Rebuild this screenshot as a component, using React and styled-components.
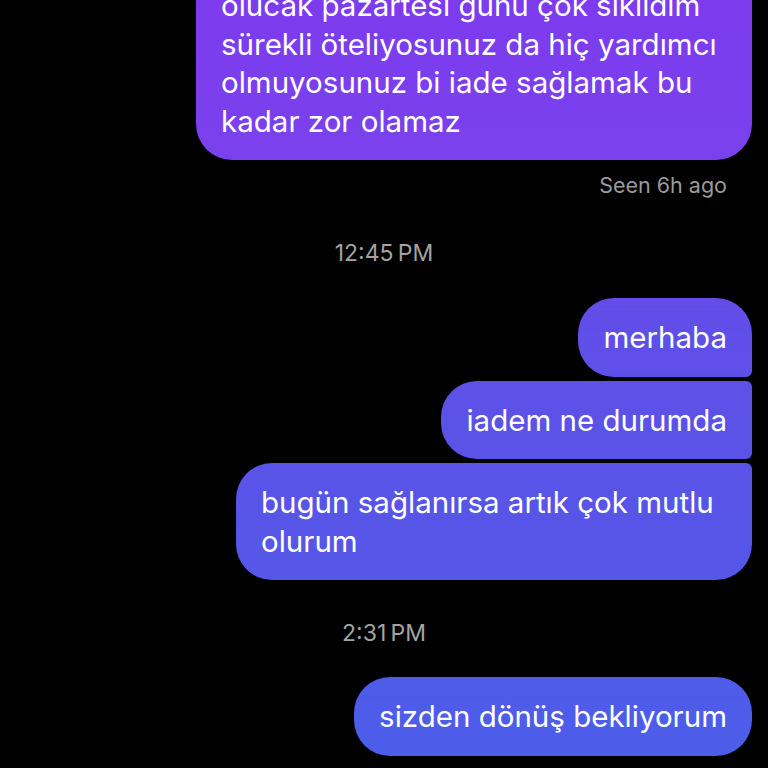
import React from "react";
import styled, { createGlobalStyle } from "styled-components";

const GlobalStyle = createGlobalStyle`
  html, body {
    margin: 0;
    padding: 0;
    background: #000;
    overflow: hidden;
  }
  body {
    font-family: Inter, "Noto Sans", "Liberation Sans", sans-serif;
    -webkit-font-smoothing: antialiased;
  }
`;

const Screen = styled.div`
  width: 768px;
  height: 768px;
  overflow: hidden;
  background: #000;
`;

const Feed = styled.div`
  display: flex;
  flex-direction: column;
  align-items: flex-end;
  padding: 0 16px 0 0;
  margin-top: -34px;
`;

const Bubble = styled.div`
  box-sizing: border-box;
  width: ${(p) => (p.$w ? `${p.$w}px` : "auto")};
  max-width: 570px;
  padding: 20px 25px 20px 25px;
  margin-top: ${(p) => p.$gap || 0}px;
  font-size: 29.5px;
  line-height: 38.5px;
  color: #fff;
  white-space: nowrap;
  border-radius: 36px ${(p) => (p.$tr ? "6px" : "36px")}
    ${(p) => (p.$br ? "6px" : "36px")} 36px;
  background: linear-gradient(
      180deg,
      #7d3bee 0px,
      #7942ec 170px,
      #5f4fe8 340px,
      #5755e7 520px,
      #4b5eea 768px
    )
    fixed;
`;

const Seen = styled.div`
  margin: 13px 25px 0 0;
  font-size: 21.5px;
  line-height: 24px;
  color: #9a9a9a;
`;

const Stamp = styled.div`
  align-self: stretch;
  padding-left: 16px;
  margin-top: ${(p) => p.$gap}px;
  text-align: center;
  font-size: 23px;
  line-height: 26px;
  color: #a3a3a3;
`;

const Lines = ({ lines }) =>
  lines.map((l, i) => (
    <React.Fragment key={i}>
      {i > 0 && <br />}
      {l}
    </React.Fragment>
  ));

export default function App() {
  return (
    <Screen>
      <GlobalStyle />
      <Feed>
        <Bubble $tr $w={556}>
          <Lines
            lines={[
              "olucak pazartesi günü çok sıkıldım",
              "sürekli öteliyosunuz da hiç yardımcı",
              "olmuyosunuz bi iade sağlamak bu",
              "kadar zor olamaz",
            ]}
          />
        </Bubble>
        <Seen>Seen 6h ago</Seen>
        <Stamp $gap={43}>12:45{"\u202F"}PM</Stamp>
        <Bubble $gap={32} $br>
          merhaba
        </Bubble>
        <Bubble $gap={4} $tr $br>
          iadem ne durumda
        </Bubble>
        <Bubble $gap={4} $tr $w={516}>
          <Lines lines={["bugün sağlanırsa artık çok mutlu", "olurum"]} />
        </Bubble>
        <Stamp $gap={40}>2:31{"\u202F"}PM</Stamp>
        <Bubble $gap={31}>sizden dönüş bekliyorum</Bubble>
      </Feed>
    </Screen>
  );
}
